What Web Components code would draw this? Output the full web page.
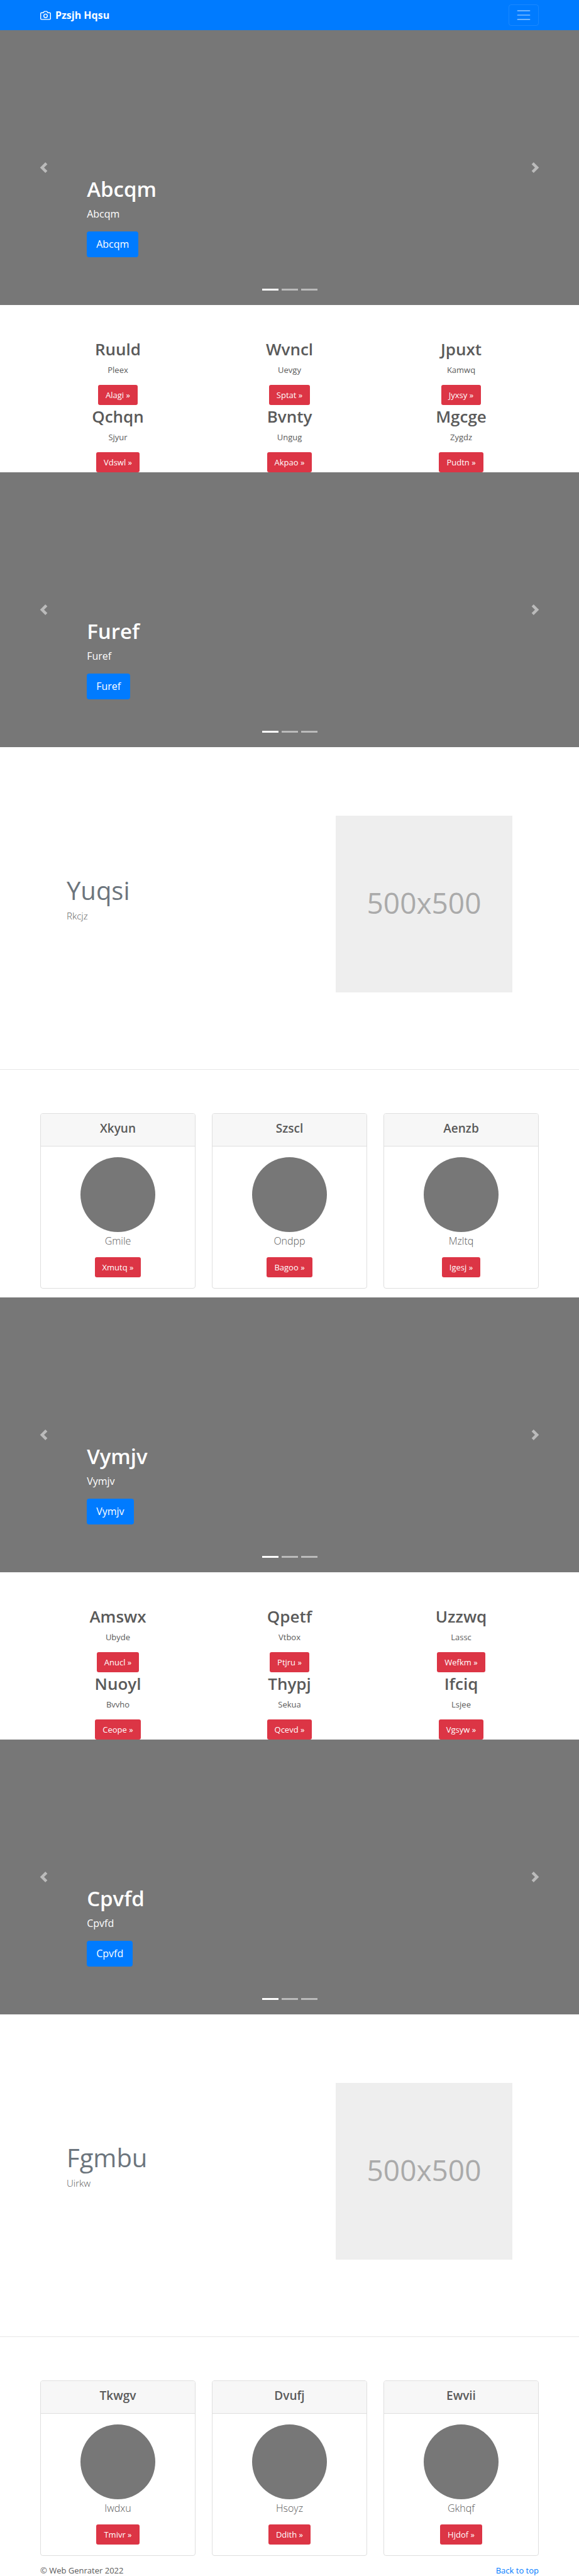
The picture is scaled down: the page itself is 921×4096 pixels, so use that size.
<!DOCTYPE html>
<html lang="en">
<head>
<meta charset="utf-8">
<title>Pzsjh Hqsu</title>
<style>
  body {
    margin: 0;
    background: #fff;
    color: #5a5a5a;
    font: 13px/20px "Open Sans", "Noto Sans", sans-serif;
  }
</style>
</head>
<body>
<site-nav id="top">Pzsjh Hqsu</site-nav>
<main>
  <hero-slide>Abcqm</hero-slide>
  <feature-grid>
    <feature-item title-text="Ruuld" action="Alagi">Pleex</feature-item>
    <feature-item title-text="Wvncl" action="Sptat">Uevgy</feature-item>
    <feature-item title-text="Jpuxt" action="Jyxsy">Kamwq</feature-item>
    <feature-item title-text="Qchqn" action="Vdswl">Sjyur</feature-item>
    <feature-item title-text="Bvnty" action="Akpao">Ungug</feature-item>
    <feature-item title-text="Mgcge" action="Pudtn">Zygdz</feature-item>
  </feature-grid>
  <hero-slide>Furef</hero-slide>
  <featurette-row><span slot="title">Yuqsi</span>Rkcjz</featurette-row>
  <card-deck>
    <profile-card title-text="Xkyun" action="Xmutq">Gmile</profile-card>
    <profile-card title-text="Szscl" action="Bagoo">Ondpp</profile-card>
    <profile-card title-text="Aenzb" action="Igesj">Mzltq</profile-card>
  </card-deck>
  <hero-slide>Vymjv</hero-slide>
  <feature-grid>
    <feature-item title-text="Amswx" action="Anucl">Ubyde</feature-item>
    <feature-item title-text="Qpetf" action="Ptjru">Vtbox</feature-item>
    <feature-item title-text="Uzzwq" action="Wefkm">Lassc</feature-item>
    <feature-item title-text="Nuoyl" action="Ceope">Bvvho</feature-item>
    <feature-item title-text="Thypj" action="Qcevd">Sekua</feature-item>
    <feature-item title-text="Ifciq" action="Vgsyw">Lsjee</feature-item>
  </feature-grid>
  <hero-slide>Cpvfd</hero-slide>
  <featurette-row><span slot="title">Fgmbu</span>Uirkw</featurette-row>
  <card-deck>
    <profile-card title-text="Tkwgv" action="Tmivr">Iwdxu</profile-card>
    <profile-card title-text="Dvufj" action="Ddith">Hsoyz</profile-card>
    <profile-card title-text="Ewvii" action="Hjdof">Gkhqf</profile-card>
  </card-deck>
</main>
<site-footer>© Web Genrater 2022</site-footer>

<script>
class BaseElement extends HTMLElement {
  connectedCallback() {
    if (this.shadowRoot) return;
    this.attachShadow({ mode: 'open' }).innerHTML =
      `<style>*{box-sizing:border-box}h1,h2,h3,p{margin:0}${this.css()}</style>${this.html()}`;
  }
}

customElements.define('site-nav', class extends BaseElement {
  css() { return `
    :host { display: block; background: #007bff; }
    nav { display: flex; align-items: center; justify-content: space-between; height: 48px; padding: 0 64px; }
    a { display: flex; align-items: center; gap: 7px; color: #fff; text-decoration: none; font-size: 16px; line-height: 26px; font-weight: 700; }
    button { display: grid; place-items: center; width: 48px; height: 34px; padding: 0; background: none; border: 1px solid rgba(255,255,255,.1); border-radius: 4px; }`; }
  html() { return `
    <nav>
      <a href="#top">
        <svg width="17" height="17" viewBox="0 0 24 24" fill="none" stroke="#fff" stroke-width="2" stroke-linecap="round" stroke-linejoin="round" aria-hidden="true"><path d="M23 19a2 2 0 0 1-2 2H3a2 2 0 0 1-2-2V8a2 2 0 0 1 2-2h4l2-3h6l2 3h4a2 2 0 0 1 2 2z"/><circle cx="12" cy="13" r="4"/></svg>
        <slot></slot>
      </a>
      <button type="button" aria-label="Toggle navigation">
        <svg width="26" height="26" viewBox="0 0 30 30"><path stroke="rgba(255,255,255,.5)" stroke-linecap="round" stroke-width="2" stroke-miterlimit="10" d="M4 7h22M4 15h22M4 23h22"/></svg>
      </button>
    </nav>`; }
});

customElements.define('hero-slide', class extends BaseElement {
  css() { return `
    :host { display: block; }
    section { position: relative; display: grid; grid-template-columns: 15% 1fr 15%; height: 437px; background: #777; color: #fff; }
    .arrow { display: grid; place-items: center; padding: 0; border: 0; background: none; opacity: .5; }
    .caption { align-self: end; padding-bottom: 76px; }
    h1 { font-size: 33px; line-height: 40px; font-weight: 600; margin-bottom: 6px; }
    p { font-size: 16px; line-height: 26px; margin-bottom: 15px; }
    a { display: inline-block; vertical-align: top; padding: 0 15px; border-radius: 4px; background: #007bff; color: #fff; font-size: 16px; line-height: 41px; text-decoration: none; }
    .dots { position: absolute; left: 0; right: 0; bottom: 23px; display: flex; justify-content: center; gap: 5px; }
    .dots button { width: 26px; height: 3px; padding: 0; border: 0; background: #fff; opacity: .5; }
    .dots button:first-child { opacity: 1; }`; }
  html() {
    const t = this.textContent.trim();
    return `
    <section>
      <button class="arrow" type="button" aria-label="Previous"><svg width="17" height="17" viewBox="0 0 8 8" fill="#fff"><path d="M5.25 0l-4 4 4 4 1.5-1.5L4.25 4l2.5-2.5L5.25 0z"/></svg></button>
      <div class="caption">
        <h1><slot></slot></h1>
        <p>${t}</p>
        <a href="#">${t}</a>
      </div>
      <button class="arrow" type="button" aria-label="Next"><svg width="17" height="17" viewBox="0 0 8 8" fill="#fff"><path d="M2.75 0l-1.5 1.5L3.75 4l-2.5 2.5L2.75 8l4-4-4-4z"/></svg></button>
      <div class="dots"><button type="button" aria-label="Slide 1"></button><button type="button" aria-label="Slide 2"></button><button type="button" aria-label="Slide 3"></button></div>
    </section>`; }
});

customElements.define('action-link', class extends BaseElement {
  css() { return `
    :host { display: block; }
    a { display: inline-block; vertical-align: top; padding: 0 12px; border-radius: 3px; background: #dc3545; color: #fff; font-size: 13px; line-height: 32px; font-weight: 400; text-decoration: none; }`; }
  html() { return `<a href="#"><slot></slot> »</a>`; }
});

customElements.define('feature-grid', class extends BaseElement {
  css() { return `
    :host { display: grid; grid-template-columns: repeat(3, 1fr); column-gap: 26px; padding: 52px 64px 0; }`; }
  html() { return `<slot></slot>`; }
});

customElements.define('feature-item', class extends BaseElement {
  css() { return `
    :host { display: block; padding-top: 2px; text-align: center; }
    h2 { font-size: 26px; line-height: 33px; font-weight: 600; margin-bottom: 6px; }
    p { margin-bottom: 14px; }`; }
  html() { return `
    <h2>${this.getAttribute('title-text')}</h2>
    <p><slot></slot></p>
    <action-link>${this.getAttribute('action')}</action-link>`; }
});

customElements.define('featurette-row', class extends BaseElement {
  css() { return `
    :host { display: block; }
    section { display: flex; align-items: center; justify-content: space-between; padding: 109px 106px 122px; border-bottom: 1px solid #e6e6e6; }
    h2 { font-size: 40px; line-height: 46px; font-weight: 400; color: #6c757d; margin-bottom: 6px; }
    p { font-size: 15px; line-height: 22px; font-weight: 300; margin-bottom: 16px; }
    .picture { display: grid; place-items: center; width: 281px; aspect-ratio: 1; padding-bottom: 6px; background: #eee; color: #aaa; font-size: 46px; line-height: 60px; }`; }
  html() { return `
    <section>
      <div><h2><slot name="title"></slot></h2><p><slot></slot></p></div>
      <div class="picture">500x500</div>
    </section>`; }
});

customElements.define('card-deck', class extends BaseElement {
  css() { return `
    :host { display: grid; grid-template-columns: repeat(3, 1fr); column-gap: 26px; padding: 69px 64px 14px; }`; }
  html() { return `<slot></slot>`; }
});

customElements.define('profile-card', class extends BaseElement {
  css() { return `
    :host { display: block; border: 1px solid #dfdfdf; border-radius: 4px; overflow: hidden; text-align: center; }
    header { padding: 11px 16px 16px; background: #f7f7f7; border-bottom: 1px solid #dfdfdf; }
    h3 { font-size: 19px; line-height: 24px; font-weight: 600; }
    .body { padding: 17px; }
    .avatar { width: 119px; height: 119px; margin: 0 auto; border-radius: 50%; background: #777; }
    p { font-size: 16px; line-height: 28px; font-weight: 300; margin-bottom: 12px; }`; }
  html() { return `
    <header><h3>${this.getAttribute('title-text')}</h3></header>
    <div class="body">
      <div class="avatar"></div>
      <p><slot></slot></p>
      <action-link>${this.getAttribute('action')}</action-link>
    </div>`; }
});

customElements.define('site-footer', class extends BaseElement {
  css() { return `
    :host { display: block; }
    footer { display: flex; justify-content: space-between; padding: 0 64px; line-height: 18px; }
    a { color: #007bff; text-decoration: none; }`; }
  html() { return `<footer><span><slot></slot></span><a href="#top">Back to top</a></footer>`; }
});
</script>
</body>
</html>
